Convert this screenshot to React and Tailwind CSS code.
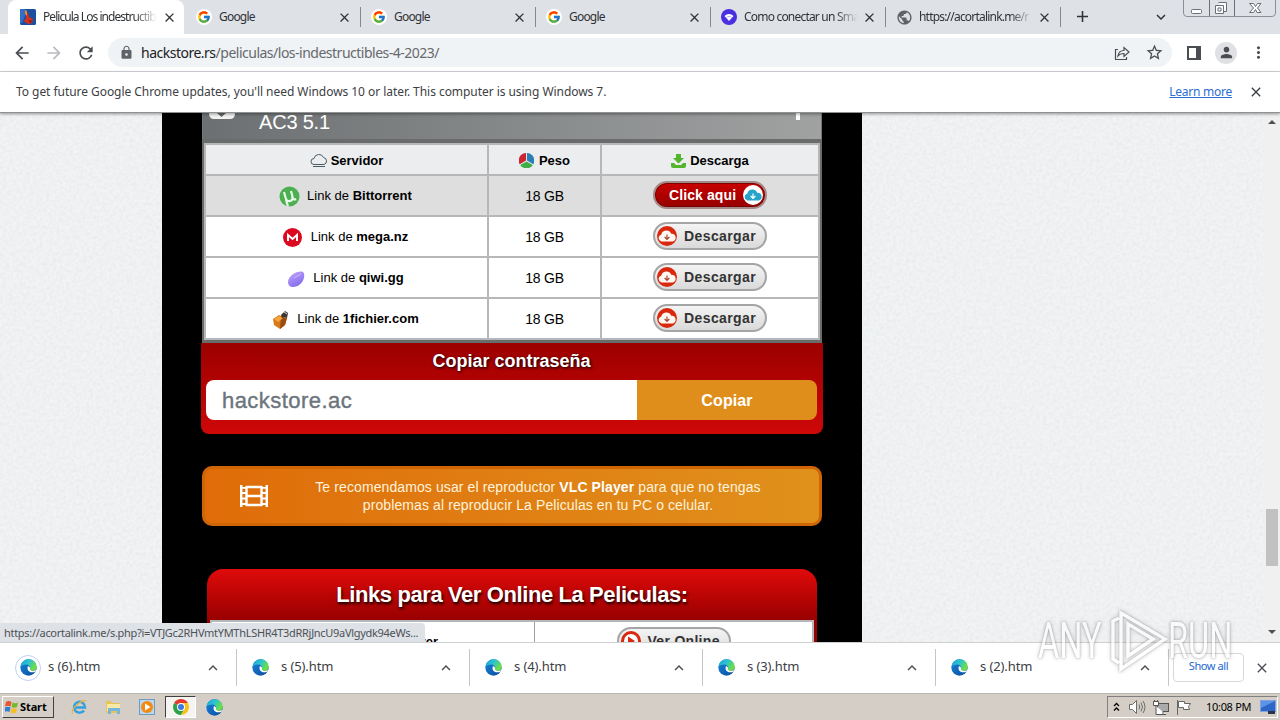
import React from 'react';
import { FcGoogle } from 'react-icons/fc';
import {
  MdAdd, MdArrowBack, MdArrowForward, MdClose, MdExpandLess, MdExpandMore,
  MdLock, MdMoreVert, MdPerson, MdPublic, MdRefresh, MdStarBorder
} from 'react-icons/md';

const tabs = [
  { icon: 'movie', title: 'Pelicula Los indestructib', active: true },
  { icon: 'google', title: 'Google' },
  { icon: 'google', title: 'Google' },
  { icon: 'google', title: 'Google' },
  { icon: 'wifi', title: 'Como conectar un Sma' },
  { icon: 'globe', title: 'https://acortalink.me/r' }
];

const servers = [
  { icon: 'torrent', name: 'Bittorrent', size: '18 GB', hot: true },
  { icon: 'mega', name: 'mega.nz', size: '18 GB' },
  { icon: 'qiwi', name: 'qiwi.gg', size: '18 GB' },
  { icon: 'fichier', name: '1fichier.com', size: '18 GB' }
];

const downloads = ['s (6).htm', 's (5).htm', 's (4).htm', 's (3).htm', 's (2).htm'];

const EdgeIcon = ({ size = 18 }) => (
  <svg width={size} height={size} viewBox="0 0 24 24">
    <defs>
      <linearGradient id="edgeTop" x1="0" y1="0" x2="1" y2="0.5">
        <stop offset="0" stopColor="#1a9fdc" />
        <stop offset="0.5" stopColor="#2cc3d0" />
        <stop offset="1" stopColor="#6fe03f" />
      </linearGradient>
      <linearGradient id="edgeBottom" x1="0" y1="0" x2="1" y2="1">
        <stop offset="0" stopColor="#1787dc" />
        <stop offset="1" stopColor="#0c4a9c" />
      </linearGradient>
    </defs>
    <circle cx="12" cy="12" r="11.5" fill="url(#edgeBottom)" />
    <path d="M.7 11C1.500 4.500 6.500.5 12 .5c7 0 11.500 5 11.500 10.300 0 4-3 6-6.200 6-2.400 0-3.800-1-3.800-1.900 0-.7.900-1 .900-2.700C14.400 9.700 12 7.700 9 7.700 5 7.700 1.500 9 .7 11z" fill="url(#edgeTop)" />
    <path d="M11 10.500c-1.500 4.500 1.500 8.300 6.500 8.300 2.500 0 4.200-.8 5.500-2 .5-.8-.2-1.300-1-.8-4.500 2-8.700.3-7.800-2.700.5-1.500-2.200-4.300-3.200-2.800z" fill="#fff" />
  </svg>
);

const tabIcons = {
  movie: (
    <svg width="16" height="16" viewBox="0 0 16 16">
      <rect width="16" height="16" rx="1.500" fill="#1d4f9f" />
      <path d="M0 0h5v7L2 14H0z" fill="#2f6fc4" />
      <path d="M6 3l2 1 1 4 4 2-1 4-4 1-4-3 2-3z" fill="#d3301f" />
      <path d="M5 1l2 1v5L5 5z" fill="#e88a3a" />
      <path d="M9 11l4 1-3 2z" fill="#8a1c18" />
    </svg>
  ),
  google: (
    <span className="flex h-4 w-4 items-center justify-center rounded-full bg-white">
      <FcGoogle size={14} />
    </span>
  ),
  wifi: (
    <svg width="16" height="16" viewBox="0 0 16 16">
      <circle cx="8" cy="8" r="8" fill="#4a2fe0" />
      <path d="M3.500 7C6 4.300 10 4.300 12.500 7L8 12z" fill="#fff" />
      <path d="M5.500 8.400c1.700-1.200 3.300-1.200 5 0" stroke="#b9a9ff" fill="none" />
    </svg>
  ),
  globe: <MdPublic size={17} color="#5f6368" />
};

const serverIcons = {
  torrent: (
    <svg width="21" height="21" viewBox="0 0 21 21">
      <circle cx="10.500" cy="10.500" r="10" fill="#4cb050" />
      <path d="M5 6l1.500 5.500c.7 3 2.500 4 4.800 3.400 2.200-.6 2.700-2.300 2.200-4.400L12 5M13 10.500c.6 2.500 1.700 3.300 4.200 2.600M7 14l2 6.500" fill="none" stroke="#e9f7e9" strokeWidth="2.200" />
    </svg>
  ),
  mega: (
    <svg width="19" height="19" viewBox="0 0 19 19" className="mr-[2px]">
      <circle cx="9.500" cy="9.500" r="9.500" fill="#dc0a1e" />
      <path d="M5 13V7l4.500 4L14 7v6" fill="none" stroke="#fff" strokeWidth="2" />
    </svg>
  ),
  qiwi: (
    <svg width="18" height="18" viewBox="0 0 18 18" className="mr-px">
      <defs>
        <linearGradient id="qiwi" x1="0" y1="0" x2="0.600" y2="1">
          <stop offset="0" stopColor="#c9a7f8" />
          <stop offset="1" stopColor="#806cf0" />
        </linearGradient>
      </defs>
      <path d="M1 12C1 6 9 1 15 1.500c2 .3 2.500 3 2 6C16 13 11 17 6 17c-3 0-5-2-5-5z" fill="url(#qiwi)" />
      <path d="M7 8l7-4" stroke="#d0b8fb" />
    </svg>
  ),
  fichier: (
    <svg width="18" height="20" viewBox="0 0 18 20">
      <path d="M1 9l6-4 8 3-2 7-5 4-6-4z" fill="#d9791a" />
      <path d="M9 7l6 1-2 7-5 4z" fill="#9a4b12" />
      <path d="M2 9l5-3 4 2-5 4z" fill="#f3a63c" />
      <path d="M9 5l4-4 3 2-1 5-3-1-2 1z" fill="#3a3733" />
      <path d="M12 2l3 2" stroke="#ddd" />
    </svg>
  )
};

const CloudBadge = ({ ring, cloud, arrow }) => (
  <svg width="20" height="20" viewBox="0 0 20 20" className="shrink-0">
    <circle cx="10" cy="10" r="10" fill={ring} />
    <path d="M4.500 15.500a3.500 3.500 0 0 1-.3-6.800 5.300 5.300 0 0 1 10-1 4 4 0 0 1 1.600 7.800z" fill={cloud} />
    <path d="M10 8.500v4.500M7.600 11l2.400 2.300 2.400-2.300" fill="none" stroke={arrow} strokeWidth="1.200" />
  </svg>
);

const TabStrip = () => (
  <div className="relative flex h-[34px] bg-[#dee1e6] pl-2">
    {tabs.map((tab, i) => (
      <div
        key={i}
        className={`flex h-[34px] shrink-0 items-center pl-3 ${tab.active ? 'w-[176px] rounded-t-lg bg-white' : 'w-[175px]'}`}
      >
        <span className="flex w-[23px] shrink-0">{tabIcons[tab.icon]}</span>
        <span
          className={`w-[114px] shrink-0 overflow-hidden text-[12px] whitespace-nowrap text-[#303336]
            ${tab.active ? 'tracking-[-0.95px]' : 'tracking-[-0.8px]'}
            ${tab.title.length > 10 ? '[mask-image:linear-gradient(to_right,#000_80%,transparent)]' : ''}`}
        >
          {tab.title}
        </span>
        <MdClose size={15} className={`shrink-0 text-[#303336] ${tab.active ? 'ml-[5px]' : 'ml-[4px]'}`} />
        {!tab.active && <span className="ml-[8px] h-5 w-px shrink-0 bg-[#85888d]" />}
      </div>
    ))}
    <MdAdd size={19} className="mt-[7px] ml-[14px] text-[#303336]" />
    <MdExpandMore size={18} className="mt-2 ml-[60px] text-[#303336]" />
    <div className="absolute top-[-2px] right-[4px] flex h-[19px] w-[93px] rounded-b border border-[#8b9096] text-[#6b7076]">
      <svg width="91" height="17" viewBox="0 0 91 17" fill="none" stroke="currentColor">
        <path d="M25.500 0v17M50.500 0v17" />
        <rect x="7.500" y="10.500" width="10" height="4" rx="1" fill="#fff" />
        <path d="M34.500 3.500h8v9h-2.500M31.500 6.500h8v8h-8zM34 9h3v3h-3z" fill="#fff" />
        <path d="M65.500 4.500h4l2 3 2-3h3.500L73.500 9l3.500 4.500h-4l-1.500-3-2 3h-4L69.500 9z" fill="#fff" />
      </svg>
    </div>
  </div>
);

const Toolbar = () => (
  <div className="flex h-[38px] items-center border-b border-[#d5d7da] bg-white pl-3 text-[#4a4d51]">
    <MdArrowBack size={20} />
    <MdArrowForward size={20} className="ml-3 text-[#b9bbbe]" />
    <MdRefresh size={20} className="ml-3" />
    <div className="ml-[12px] flex h-[29px] w-[1064px] items-center rounded-full bg-[#f0f3f5] pl-[11px]">
      <MdLock size={15} className="text-[#5f6368]" />
      <span className="ml-[7px] text-[14px] tracking-[-0.5px] whitespace-nowrap text-[#66696d]">
        <span className="text-[#202124]">hackstore.rs</span>/peliculas/los-indestructibles-4-2023/
      </span>
      <svg width="16" height="16" viewBox="0 0 16 16" fill="none" stroke="currentColor" strokeWidth="1.200" className="ml-auto">
        <path d="M4 4.500H1.500v10h11V12" />
        <path d="M4 11c.5-4 2.500-5.500 6-5.500V2.500l5 4.500-5 4.500V8.500C7.500 8.500 5.500 9 4 11z" />
      </svg>
      <MdStarBorder size={19} className="mr-[8px] ml-[15px]" />
    </div>
    <svg width="14" height="14" viewBox="0 0 14 14" className="ml-[15px]">
      <path d="M0 0h14v14H0zM2 2v10h7V2z" fill="currentColor" fillRule="evenodd" />
    </svg>
    <span className="ml-[14px] flex h-[22px] w-[22px] items-center justify-center rounded-full bg-[#dfe1e5]">
      <MdPerson size={17} />
    </span>
    <MdMoreVert size={19} className="ml-[12px]" />
  </div>
);

const InfoBar = () => (
  <div className="relative z-10 flex h-[41px] items-center border-b border-[#8f9291] bg-white pl-4 text-[12px] text-[#3c4043] shadow-[0_1px_3px_rgba(0,0,0,0.4)]">
    <span className="tracking-[-0.05px] whitespace-nowrap">
      To get future Google Chrome updates, you'll need Windows 10 or later. This computer is using Windows 7.
    </span>
    <a className="ml-auto tracking-[-0.25px] text-[#2a6fd0] underline">Learn more</a>
    <MdClose size={16} className="mr-[16px] ml-[16px]" />
  </div>
);

const ServerTable = () => (
  <div className="mx-auto w-[620px] border-x-2 border-t-4 border-b-[3px] border-[#6a6b6b] text-[13px] text-black">
    <div className="grid grid-cols-[281px_111px_216px] grid-rows-[29px_39px_39px_39px_39px] gap-[2px] bg-[#b6b7b8] p-[2px]">
      <div className="flex items-center justify-center bg-[#ebedef] pt-[2px] font-bold">
        <svg width="18" height="15" viewBox="0 0 18 15" fill="none" stroke="#4b5960" className="mr-[3px]">
          <path d="M4 11.500a3 3 0 0 1 0-6 5 5 0 0 1 9.500-1 3.600 3.600 0 0 1 .5 7zM3 13.500h12" />
        </svg>
        Servidor
      </div>
      <div className="flex items-center justify-center bg-[#ebedef] pt-[2px] font-bold">
        <svg width="15" height="15" viewBox="0 0 16 16" className="mr-[5px]">
          <path d="M7.500 8V0A8 8 0 0 0 .8 12z" fill="#cc2431" />
          <path d="M8.500 8V0a8 8 0 0 1 6.700 12z" fill="#2a7fb5" />
          <path d="M8 9l6.700 3.800a8 8 0 0 1-13.400 0z" fill="#3fae49" />
        </svg>
        Peso
      </div>
      <div className="flex items-center justify-center bg-[#ebedef] pt-[2px] font-bold">
        <svg width="15" height="14" viewBox="0 0 15 14" fill="#53b52c" className="mr-1">
          <path d="M5 0h5v4h3L7.500 9.500 2 4h3z" />
          <path d="M0 9h3l2 2h5l2-2h3v3q0 2-2 2H2q-2 0-2-2z" />
        </svg>
        Descarga
      </div>
      {servers.map(server => {
        const bg = server.hot ? 'bg-[#dedede]' : 'bg-white';
        return (
          <React.Fragment key={server.name}>
            <div className={`flex items-center justify-center pr-[2px] ${bg}`}>
              <span className="mt-[2px] mr-[7px]">{serverIcons[server.icon]}</span>
              <span>Link de <b>{server.name}</b></span>
            </div>
            <div className={`flex items-center justify-center pt-px text-[14px] tracking-[-0.2px] ${bg}`}>{server.size}</div>
            <div className={`flex items-center justify-center pb-[2px] ${bg}`}>
              {server.hot ? (
                <button className="flex h-[28px] w-[114px] items-center justify-between rounded-full border-2 border-[#a58a8a] bg-linear-to-b from-[#c90000] to-[#960000] pr-[2px] pl-[14px] text-[14px] font-bold tracking-[0.1px] text-white ring-1 ring-[#7b0000] ring-inset">
                  <span className="pt-px">Click aqui</span>
                  <CloudBadge ring="#fff" cloud="#28a4cb" arrow="#fff" />
                </button>
              ) : (
                <button className="flex h-[28px] w-[114px] items-center rounded-full border-2 border-[#a5a5a5] bg-linear-to-b from-[#f4f4f4] to-[#dadada] pl-[2px] text-[14px] font-bold tracking-[0.4px] text-[#333]">
                  <CloudBadge ring="#d8290f" cloud="#fff8f0" arrow="#a34a38" />
                  <span className="ml-[7px] pt-px">Descargar</span>
                </button>
              )}
            </div>
          </React.Fragment>
        );
      })}
    </div>
  </div>
);

const PasswordBox = () => (
  <div className="mx-auto h-[91px] w-[622px] rounded-b-lg bg-linear-to-b from-[#9c0000] to-[#cf0808] pr-[6px] pl-[5px]">
    <div className="h-[37px] text-center text-[18px] leading-[36px] font-bold text-white [text-shadow:1px_1px_3px_#000]">
      Copiar contraseña
    </div>
    <div className="flex h-[40px] overflow-hidden rounded-lg">
      <div className="w-[431px] bg-white pl-4 text-[22px] leading-[41px] tracking-[0.45px] text-[#6c757d] [-webkit-text-stroke:0.4px_#6c757d]">hackstore.ac</div>
      <button className="flex-1 bg-[#e08e1b] pt-px text-[16px] font-bold tracking-[0.1px] text-white">Copiar</button>
    </div>
  </div>
);

const VlcNotice = () => (
  <div className="mx-auto mt-8 flex h-[60px] w-[620px] items-center rounded-[10px] border-[3px] border-[#cf6505] bg-linear-to-r from-[#df6c08] to-[#e0911c] pl-[35px] text-[14px] leading-[18px] text-[#fff3dc]">
    <svg width="28" height="22" viewBox="0 0 28 22" fill="none" stroke="#fff" strokeWidth="2.400">
      <path d="M1.200 0v22M26.800 0v22M6.500 1v20M21.500 1v20M6 2h16M6 11h16M6 20h16" />
      <path d="M1 2.800h6M1 8h6M1 13.500h6M1 19h6M21 2.800h6M21 8h6M21 13.500h6M21 19h6" strokeWidth="1.800" />
    </svg>
    <p className="ml-[36px] w-[468px] text-center tracking-[0.1px]">
      Te recomendamos usar el reproductor <b className="text-white">VLC Player</b> para que no tengas<br />
      problemas al reproducir La Peliculas en tu PC o celular.
    </p>
  </div>
);

const OnlineLinks = () => (
  <div className="mx-auto mt-[43px] w-[610px] rounded-t-2xl bg-linear-to-b from-[#e00b0b] to-[#950000] to-[54px]">
    <h2 className="h-[51px] text-center text-[22px] leading-[51px] font-bold tracking-[-0.4px] text-white [text-shadow:1px_2px_3px_#000]">
      Links para Ver Online La Peliculas:
    </h2>
    <div className="mr-[3px] ml-[3px] grid h-[50px] grid-cols-[322px_1fr] gap-px border-2 border-[#b6b7b8] bg-[#a0a0a0]">
      <div className="bg-white pt-[10px] pl-[187px] text-[13px] font-bold text-black">Player</div>
      <div className="flex justify-center bg-white pt-[5px]">
        <button className="flex h-[28px] w-[114px] items-center rounded-full border-2 border-[#a5a5a5] bg-linear-to-b from-[#f4f4f4] to-[#dadada] pl-[2px] text-[14px] font-bold text-[#333]">
          <svg width="20" height="20" viewBox="0 0 20 20">
            <circle cx="10" cy="10" r="8.500" fill="#fff" stroke="#d8290f" strokeWidth="3" />
            <path d="M7 5.500l7 4.500-7 4.500z" fill="#d8290f" />
          </svg>
          <span className="ml-[7px] tracking-[0.3px]">Ver Online</span>
        </button>
      </div>
    </div>
  </div>
);

const Viewport = () => (
  <div className="relative flex h-[529px] overflow-hidden bg-[#f1f3f4]">
    {/* paper grain behind the page column */}
    <svg width="1264" height="529" className="absolute">
      <filter id="grain">
        <feTurbulence type="fractalNoise" baseFrequency="0.300" numOctaves="2" />
        <feColorMatrix values="0 0 0 0 0.500  0 0 0 0 0.520  0 0 0 0 0.560  0.500 0 0 0 -0.170" />
      </filter>
      <rect width="1264" height="529" filter="url(#grain)" opacity="0.600" />
    </svg>
    <div className="relative ml-[162px] h-[529px] w-[700px] shrink-0 overflow-hidden bg-black">
      <div className="mx-auto flex h-[26px] w-[620px] items-start border-x border-[#777] bg-linear-to-r from-[#6d7072] to-[#a0a2a2]">
        <svg width="26" height="7" viewBox="0 0 26 7" className="ml-[6px]">
          <path d="M0 0h26q0 6-5 6H5Q0 6 0 0z" fill="#f2f2f2" />
          <path d="M8 0h9l-4.500 4z" fill="#666" />
        </svg>
        <span className="ml-[24px] text-[20px] leading-[18px] tracking-[-0.2px] text-white">AC3 5.1</span>
        <span className="mr-[21px] ml-auto h-[7px] w-[4px] bg-white" />
      </div>
      <ServerTable />
      <PasswordBox />
      <VlcNotice />
      <OnlineLinks />
    </div>
    <div className="relative ml-auto flex w-4 flex-col items-center bg-[#f0f0f1] pt-[6px] pb-[7px]">
      <svg width="8" height="5" viewBox="0 0 8 5"><path d="M0 5l4-4 4 4z" fill="#505050" /></svg>
      <span className="mt-[385px] h-[57px] w-[12px] bg-[#c1c1c1]" />
      <svg width="8" height="5" viewBox="0 0 8 5" className="mt-auto"><path d="M0 0l4 4 4-4z" fill="#505050" /></svg>
    </div>
    {/* link target bubble */}
    <div className="absolute bottom-0 left-0 h-[19px] w-[425px] rounded-tr bg-[#dee1e6] pl-1 font-['Noto_Sans',sans-serif] text-[11px] leading-[19px] tracking-[-0.3px] whitespace-nowrap text-[#4d5156]">
      https://acortalink.me/s.php?i=VTJGc2RHVmtYMThLSHR4T3dRRjJncU9aVlgydk94eWs...
    </div>
  </div>
);

const DownloadBar = () => (
  <div className="flex h-[51px] items-center border-t border-[#cfd0d1] bg-white pb-px">
    {downloads.map((name, i) => (
      <div
        key={name}
        className={`flex h-[37px] shrink-0 items-center border-r border-[#c4c6c9] ${i === 0 ? 'w-[237px] pl-[15px]' : 'w-[233px] pl-[11px]'}`}
      >
        <span className={`flex h-[26px] w-[26px] items-center justify-center rounded-full ${i === 0 ? 'border border-[#bfd0ee]' : 'pr-[2px]'}`}>
          <EdgeIcon size={17} />
        </span>
        <span className="ml-[7px] pb-[2px] text-[13px] tracking-[-0.1px] text-[#3c4043]">{name}</span>
        <MdExpandLess size={18} className="mr-[14px] ml-auto text-[#4a4d51]" />
      </div>
    ))}
    <button className="ml-1 h-[29px] w-[71px] rounded border border-[#d6d9dc] pb-[2px] text-[11px] tracking-[-0.4px] text-[#1a67d2]">Show all</button>
    <MdClose size={16} className="ml-[10px] text-[#4a4d51]" />
  </div>
);

const Taskbar = () => (
  <div className="flex h-[27px] items-center border-t border-[#bcb9b3] bg-[#d4cec6] pl-[2px] text-[11px] text-black">
    <button className="flex h-[22px] w-[52px] items-center border border-t-white border-r-[#404040] border-b-[#404040] border-l-white pl-[2px] font-bold tracking-[-0.1px]">
      <svg width="14" height="14" viewBox="0 0 14 14" className="mr-px shrink-0">
        <path d="M1 2q3-2 5.500 0L5.500 6.500Q3 5 0 6.500z" fill="#e8562a" />
        <path d="M7.500 2.500q3 1.500 5.500 0L12 7Q9 8.500 6.500 7z" fill="#77b82a" />
        <path d="M0 7.500Q3 6 5.500 7.500l-1 4.500Q2 10.500-1 12z" fill="#2f7fd6" />
        <path d="M6.500 8Q9 9.500 12 8l-1 4.500Q8 14 5.500 12.500z" fill="#f5bf22" />
      </svg>
      Start
    </button>
    <svg width="17" height="17" viewBox="0 0 17 17" className="ml-[17px]" fill="none">
      <path d="M13 11.500A5.500 5.500 0 1 1 14 8.500H4" stroke="#33a0e0" strokeWidth="2.500" />
      <path d="M1.500 14.500C-.5 10 11-.5 15.500 2" stroke="#eab63a" strokeWidth="1.300" />
    </svg>
    <svg width="17" height="16" viewBox="0 0 17 16" className="ml-[17px]">
      <path d="M1 2h5l1 2h8v10H1z" fill="#e8c35a" />
      <path d="M2 5h13v7H2z" fill="#fae9a6" />
      <path d="M3 9h12v6h-3v-3H6v3H3z" fill="#76b6dc" />
    </svg>
    <svg width="16" height="16" viewBox="0 0 16 16" className="ml-[17px]">
      <rect x="0.500" y="0.500" width="15" height="15" fill="#b9d7ee" stroke="#6c9cc4" />
      <circle cx="8" cy="8" r="6" fill="#f38b12" />
      <path d="M6 4.500L11.500 8 6 11.500z" fill="#fff" />
    </svg>
    <span className="ml-[10px] flex h-[22px] w-[31px] items-center justify-center border border-t-[#404040] border-r-white border-b-white border-l-[#404040] bg-[#f6f4f1]">
      <svg width="16" height="16" viewBox="0 0 16 16">
        <path d="M8 8L1.100 4A8 8 0 0 1 14.900 4z" fill="#e23a2e" />
        <path d="M8 8L1.100 4A8 8 0 0 0 8 16l3.500-6z" fill="#2da14a" />
        <path d="M8 4h6.900A8 8 0 0 1 8 16l3.500-6z" fill="#fbc116" />
        <circle cx="8" cy="8" r="4" fill="#fff" />
        <circle cx="8" cy="8" r="3" fill="#3b79e1" />
      </svg>
    </span>
    <span className="ml-[10px]"><EdgeIcon size={17} /></span>
    <div className="mr-[2px] ml-auto flex h-[22px] w-[171px] items-center border border-t-[#808080] border-r-white border-b-white border-l-[#808080] pl-[5px]">
      <svg width="7" height="10" viewBox="0 0 7 10" fill="none" stroke="#000" strokeWidth="1.300">
        <path d="M1 4l2.500-2.500L6 4M1 8.500L3.500 6 6 8.500" />
      </svg>
      <svg width="17" height="14" viewBox="0 0 17 14" fill="none" stroke="#6d6d6d" className="ml-[9px]">
        <path d="M.5 4.500h3l4-4v13l-4-4h-3z" fill="#fff" />
        <path d="M10 4.500q1.500 2.500 0 5M12 2.500q3 4.500 0 9M14 1q4 6 0 12" />
      </svg>
      <svg width="16" height="15" viewBox="0 0 16 15" fill="none" stroke="#555" className="ml-[7px]">
        <rect x="4.500" y="3.500" width="11" height="8" fill="#aaa" />
        <path d="M.5 1.500h5v4h-5zM1.500 0v2M4.500 0v2M3 6v8.500h10M10 12v2" fill="#fff" />
      </svg>
      <svg width="16" height="15" viewBox="0 0 16 15" fill="#fff" stroke="#666" className="ml-[7px]">
        <path d="M1.500 0v15M2.500 1.500h6v2h6l-2 3 1 3h-6v-2h-5z" />
      </svg>
      <span className="ml-[14px] tracking-[-0.3px] whitespace-nowrap">10:08 PM</span>
      <svg width="16" height="14" viewBox="0 0 16 14" className="mr-[1px] ml-auto">
        <rect x="0.500" y="0.500" width="15" height="11" fill="#2e66c8" stroke="#7fa4dd" />
        <path d="M1 1h14L1 8z" fill="#5c93e6" />
        <path d="M8 11h7v3H8z" fill="#2a3446" />
      </svg>
    </div>
  </div>
);

const Watermark = () => (
  <svg
    width="200"
    height="70"
    viewBox="0 0 200 70"
    className="pointer-events-none absolute top-[606px] left-[1036px] z-20 overflow-visible opacity-65 [filter:drop-shadow(0_0_1px_rgba(70,70,70,0.6))_drop-shadow(0_0_2px_rgba(90,90,90,0.4))]"
    fill="#fff"
    fontFamily="Roboto, sans-serif"
    fontSize="44"
  >
    <text transform="translate(2 52) scale(0.740 1.120)">ANY</text>
    <text transform="translate(132 52) scale(0.740 1.120)">RUN</text>
    <path d="M83 12l-6 3v38l6 4M85 7l44 26-44 30zM92 18v32l25-17z" fill="none" stroke="#fff" strokeWidth="3.500" />
  </svg>
);

const App = () => (
  <div className="relative flex h-[720px] w-[1280px] flex-col overflow-hidden font-['Liberation_Sans',Arial,sans-serif]">
    <div className="font-['Noto_Sans',sans-serif]">
      <TabStrip />
      <Toolbar />
      <InfoBar />
    </div>
    <Viewport />
    <div className="font-['Noto_Sans',sans-serif]">
      <DownloadBar />
      <Taskbar />
    </div>
    <Watermark />
  </div>
);

export default App;
